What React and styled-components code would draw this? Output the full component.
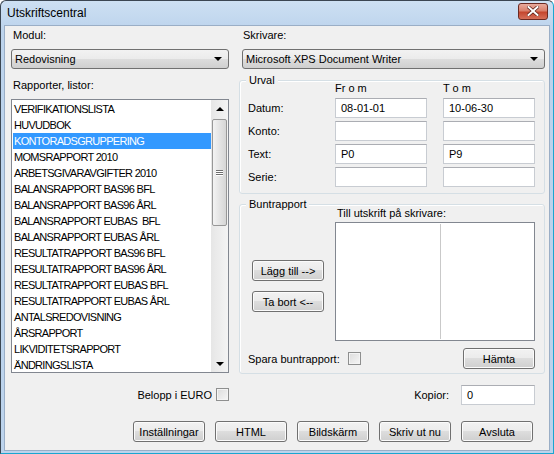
import React from "react";
import styled, { createGlobalStyle } from "styled-components";

const GlobalStyle = createGlobalStyle`
  html, body {
    margin: 0;
    padding: 0;
    background: #ffffff;
  }
  body {
    font-family: "Liberation Sans", Arial, sans-serif;
    font-size: 11px;
    color: #000;
  }
`;

const Window = styled.div`
  width: 554px;
  height: 454px;
  box-sizing: border-box;
  border: 1px solid #3b4652;
  border-right-color: #1aa6d0;
  border-bottom-color: #1aa6d0;
  border-radius: 6px 6px 0 0;
  background: linear-gradient(#cde0f3, #bcd3ec 30px, #bcd3ec);
  display: flex;
  flex-direction: column;
  overflow: hidden;
`;

const TitleBar = styled.div`
  height: 24px;
  flex: none;
  display: flex;
  align-items: center;
  justify-content: space-between;
  padding: 0 5px 0 6px;
  font-size: 12px;
`;

const CloseButton = styled.div`
  width: 30px;
  height: 17px;
  box-sizing: border-box;
  border: 1px solid #6b2a22;
  border-radius: 3px;
  background: linear-gradient(#e9ab9d, #d9806c 45%, #c5472f 55%, #d6705a);
  display: flex;
  align-items: center;
  justify-content: center;
  margin-top: -4px;
`;

const Client = styled.div`
  flex: 1;
  margin: 0 3px 2px 3px;
  background: #f0f0f0;
  border: 1px solid #9aaec6;
  padding: 0 4px 0 6px;
  display: flex;
  flex-direction: column;
`;

const Columns = styled.div`
  display: grid;
  grid-template-columns: 218px 306px;
  column-gap: 10px;
`;

const Column = styled.div`
  display: flex;
  flex-direction: column;
`;

const Label = styled.div`
  line-height: 13px;
  margin-top: ${(p) => p.$top || 0}px;
  margin-left: ${(p) => p.$left || 2}px;
  white-space: pre;
`;

const Select = styled.div`
  height: 20px;
  box-sizing: border-box;
  margin-top: 7px;
  margin-left: ${(p) => p.$left || 0}px;
  border: 1px solid #707070;
  border-radius: 3px;
  background: linear-gradient(#f2f2f2, #ebebeb 50%, #dddddd 50%, #cfcfcf);
  display: flex;
  align-items: center;
  justify-content: space-between;
  padding: 0 6px 0 3px;
`;

const Arrow = styled.span`
  width: 0;
  height: 0;
  border-left: 4px solid transparent;
  border-right: 4px solid transparent;
  border-top: ${(p) => (p.$up ? "none" : "4px solid #000")};
  border-bottom: ${(p) => (p.$up ? "4px solid #000" : "none")};
`;

const ListBox = styled.div`
  margin-top: 7px;
  height: 274px;
  box-sizing: border-box;
  border: 1px solid #828790;
  background: #fff;
  display: flex;
  overflow: hidden;
`;

const Items = styled.div`
  flex: 1;
  padding: 1px 0 0 1px;
  letter-spacing: -0.7px;
`;

const Item = styled.div`
  height: 16px;
  line-height: 16px;
  padding-left: 1px;
  white-space: pre;
  background: ${(p) => (p.$selected ? "#3399ff" : "transparent")};
  color: ${(p) => (p.$selected ? "#fff" : "#000")};
`;

const ScrollBar = styled.div`
  width: 17px;
  flex: none;
  background: linear-gradient(90deg, #e6e6e6, #f4f4f4);
  display: flex;
  flex-direction: column;
`;

const ScrollArrow = styled.div`
  height: 17px;
  display: flex;
  align-items: center;
  justify-content: center;
`;

const Thumb = styled.div`
  margin-top: 2px;
  height: 107px;
  margin-left: 1px;
  margin-right: 1px;
  box-sizing: border-box;
  border: 1px solid #979797;
  border-radius: 2px;
  background: linear-gradient(90deg, #f3f3f3, #e4e4e4 50%, #d6d6d6);
  display: flex;
  flex-direction: column;
  align-items: center;
  justify-content: center;
  gap: 1px;
`;

const Grip = styled.div`
  width: 7px;
  height: 1px;
  background: #6e6e6e;
  box-shadow: 0 1px 0 #fff;
`;

const Spacer = styled.div`
  flex: 1;
`;

const CheckRow = styled.div`
  display: flex;
  align-items: center;
  justify-content: ${(p) => p.$justify || "flex-start"};
  gap: ${(p) => p.$gap || 4}px;
  margin-top: ${(p) => p.$top || 0}px;
  padding-right: ${(p) => p.$right || 0}px;
`;

const CheckBox = styled.div`
  width: 13px;
  height: 13px;
  box-sizing: border-box;
  border: 1px solid #8e8f8f;
  background: linear-gradient(135deg, #dcdcdc, #f6f6f6);
  box-shadow: inset 0 0 0 1px #f4f4f4;
`;

const Group = styled.div`
  position: relative;
  box-sizing: border-box;
  height: ${(p) => p.$height}px;
  margin-top: ${(p) => p.$top}px;
  border: 1px solid #d5dfe5;
  border-radius: 3px;
  padding: 0 9px 0 8px;
  box-shadow: inset 1px 1px 0 #fff;
`;

const Caption = styled.span`
  position: absolute;
  top: -8px;
  left: 6px;
  padding: 0 3px;
  line-height: 14px;
  background: #f0f0f0;
`;

const UrvalGrid = styled.div`
  display: grid;
  grid-template-columns: 71px 92px 92px;
  grid-template-rows: 14px repeat(4, 20px);
  column-gap: 16px;
  row-gap: 3px;
  align-items: center;
`;

const HeadCell = styled.div`
  line-height: 13px;
  white-space: pre;
`;

const TextInput = styled.div`
  height: 20px;
  box-sizing: border-box;
  border: 1px solid #c8ccd2;
  border-top-color: #abadb3;
  background: #fff;
  padding: 0 5px;
  line-height: 18px;
  width: ${(p) => (p.$width ? `${p.$width}px` : "auto")};
`;

const BuntGrid = styled.div`
  display: grid;
  grid-template-columns: 87px 200px;
  padding-top: 1px;
`;

const PrintBox = styled.div`
  margin-top: 2px;
  height: 119px;
  box-sizing: border-box;
  border: 1px solid #828790;
  background: #fff;
  display: grid;
  grid-template-columns: 105px 1fr;
`;

const Divider = styled.div`
  border-right: 1px solid #c9c9c9;
  margin: 1px 0;
`;

const SideButtons = styled.div`
  display: flex;
  flex-direction: column;
  gap: 10px;
  padding: 40px 0 0 4px;
`;

const Button = styled.div`
  width: 72px;
  height: 21px;
  box-sizing: border-box;
  border: 1px solid #707070;
  border-radius: 3px;
  background: linear-gradient(#f2f2f2, #ebebeb 50%, #dddddd 50%, #cfcfcf);
  box-shadow: inset 0 0 0 1px #fbfbfb;
  display: flex;
  align-items: center;
  justify-content: center;
  white-space: pre;
  flex: none;
`;

const SaveRow = styled.div`
  display: flex;
  align-items: center;
  justify-content: space-between;
  margin-top: 7px;
`;

const ButtonBar = styled.div`
  display: flex;
  justify-content: flex-end;
  gap: 10px;
  margin-top: 16px;
  padding-right: 12px;
`;

const reports = [
  "VERIFIKATIONSLISTA",
  "HUVUDBOK",
  "KONTORADSGRUPPERING",
  "MOMSRAPPORT 2010",
  "ARBETSGIVARAVGIFTER 2010",
  "BALANSRAPPORT BAS96 BFL",
  "BALANSRAPPORT BAS96 ÅRL",
  "BALANSRAPPORT EUBAS  BFL",
  "BALANSRAPPORT EUBAS ÅRL",
  "RESULTATRAPPORT BAS96 BFL",
  "RESULTATRAPPORT BAS96 ÅRL",
  "RESULTATRAPPORT EUBAS BFL",
  "RESULTATRAPPORT EUBAS ÅRL",
  "ANTALSREDOVISNING",
  "ÅRSRAPPORT",
  "LIKVIDITETSRAPPORT",
  "ÄNDRINGSLISTA",
];

const urvalRows = [
  { label: "Datum:", from: "08-01-01", to: "10-06-30" },
  { label: "Konto:", from: "", to: "" },
  { label: "Text:", from: "P0", to: "P9" },
  { label: "Serie:", from: "", to: "" },
];

export default function App() {
  return (
    <>
      <GlobalStyle />
      <Window>
        <TitleBar>
          <span>Utskriftscentral</span>
          <CloseButton>
            <svg width="12" height="10" viewBox="0 0 12 10">
              <path
                d="M1.5 1 L10.5 9 M10.5 1 L1.5 9"
                stroke="#5a2018"
                strokeWidth="3.4"
                strokeLinecap="square"
              />
              <path
                d="M1.5 1 L10.5 9 M10.5 1 L1.5 9"
                stroke="#ffffff"
                strokeWidth="2"
                strokeLinecap="square"
              />
            </svg>
          </CloseButton>
        </TitleBar>

        <Client>
          <Columns>
            <Column>
              <Label $top={3}>Modul:</Label>
              <Select>
                <span>Redovisning</span>
                <Arrow />
              </Select>
              <Label $top={10}>Rapporter, listor:</Label>
              <ListBox>
                <Items>
                  {reports.map((r) => (
                    <Item key={r} $selected={r === "KONTORADSGRUPPERING"}>
                      {r}
                    </Item>
                  ))}
                </Items>
                <ScrollBar>
                  <ScrollArrow>
                    <Arrow $up />
                  </ScrollArrow>
                  <Thumb>
                    <Grip />
                    <Grip />
                    <Grip />
                  </Thumb>
                  <Spacer />
                  <ScrollArrow>
                    <Arrow />
                  </ScrollArrow>
                </ScrollBar>
              </ListBox>
              <CheckRow $justify="flex-end" $top={15}>
                <span>Belopp i EURO</span>
                <CheckBox />
              </CheckRow>
            </Column>

            <Column>
              <Label $top={3} $left={4}>Skrivare:</Label>
              <Select $left={3}>
                <span>Microsoft XPS Document Writer</span>
                <Arrow />
              </Select>

              <Group $top={11} $height={114}>
                <Caption>Urval</Caption>
                <UrvalGrid>
                  <span />
                  <HeadCell>Fr o m</HeadCell>
                  <HeadCell>T o m</HeadCell>
                  {urvalRows.map((row) => (
                    <React.Fragment key={row.label}>
                      <span>{row.label}</span>
                      <TextInput>{row.from}</TextInput>
                      <TextInput>{row.to}</TextInput>
                    </React.Fragment>
                  ))}
                </UrvalGrid>
              </Group>

              <Group $top={10} $height={170}>
                <Caption>Buntrapport</Caption>
                <BuntGrid>
                  <span />
                  <Label $left={0} $top={1}>Till utskrift på skrivare:</Label>
                  <SideButtons>
                    <Button>Lägg till --&gt;</Button>
                    <Button>Ta bort &lt;--</Button>
                  </SideButtons>
                  <PrintBox>
                    <Divider />
                    <span />
                  </PrintBox>
                </BuntGrid>
                <SaveRow>
                  <CheckRow $gap={8}>
                    <span>Spara buntrapport:</span>
                    <CheckBox />
                  </CheckRow>
                  <Button>Hämta</Button>
                </SaveRow>
              </Group>

              <CheckRow $justify="flex-end" $gap={12} $top={11} $right={10}>
                <span>Kopior:</span>
                <TextInput $width={74}>0</TextInput>
              </CheckRow>
            </Column>
          </Columns>

          <ButtonBar>
            <Button>Inställningar</Button>
            <Button>HTML</Button>
            <Button>Bildskärm</Button>
            <Button>Skriv ut nu</Button>
            <Button>Avsluta</Button>
          </ButtonBar>
        </Client>
      </Window>
    </>
  );
}
